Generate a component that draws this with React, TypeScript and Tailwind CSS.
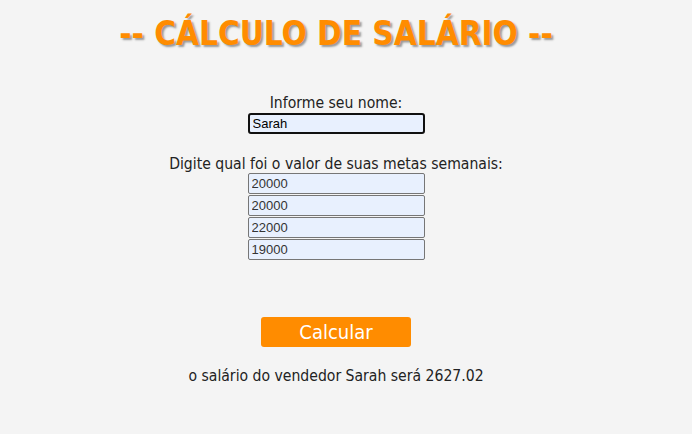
export default function App() {
  const metas = ["20000", "20000", "22000", "19000"];

  return (
    <div className="min-h-[434px] w-full bg-[#f4f4f4] font-['DejaVu_Sans',sans-serif] [font-stretch:condensed] text-[#222]">
      <div className="w-[672px] flex flex-col items-center">
        <h1 className="mt-[14px] text-[33px] font-bold leading-[40px] text-[#ff8c00] [text-shadow:2px_2px_2px_#999]">
          -- CÁLCULO DE SALÁRIO --
        </h1>

        <p className="mt-[40px] text-[15.6px] leading-[18px]">Informe seu nome:</p>
        <input
          defaultValue="Sarah"
          className="mt-px h-[21px] w-[177px] rounded-[3px] border-2 border-[#101010] bg-[#e8f0fe] px-[3px] font-['Liberation_Sans',sans-serif] text-[13px] text-black outline-none"
        />

        <p className="mt-[21px] text-[15.6px] leading-[18px]">Digite qual foi o valor de suas metas semanais:</p>
        <div className="flex flex-col gap-px">
          {metas.map((m, i) => (
            <input
              key={i}
              defaultValue={m}
              className="h-[21px] w-[177px] rounded-[2px] border border-[#767676] bg-[#e8f0fe] px-[3px] font-['Liberation_Sans',sans-serif] text-[13px] text-[#333] outline-none"
            />
          ))}
        </div>

        <button className="mt-[57px] h-[30px] w-[150px] rounded-[3px] bg-[#ff8c00] text-[20px] leading-[30px] text-white">
          Calcular
        </button>

        <p className="mt-[20px] text-[15.6px] leading-[18px]">o salário do vendedor Sarah será 2627.02</p>
      </div>
    </div>
  );
}
